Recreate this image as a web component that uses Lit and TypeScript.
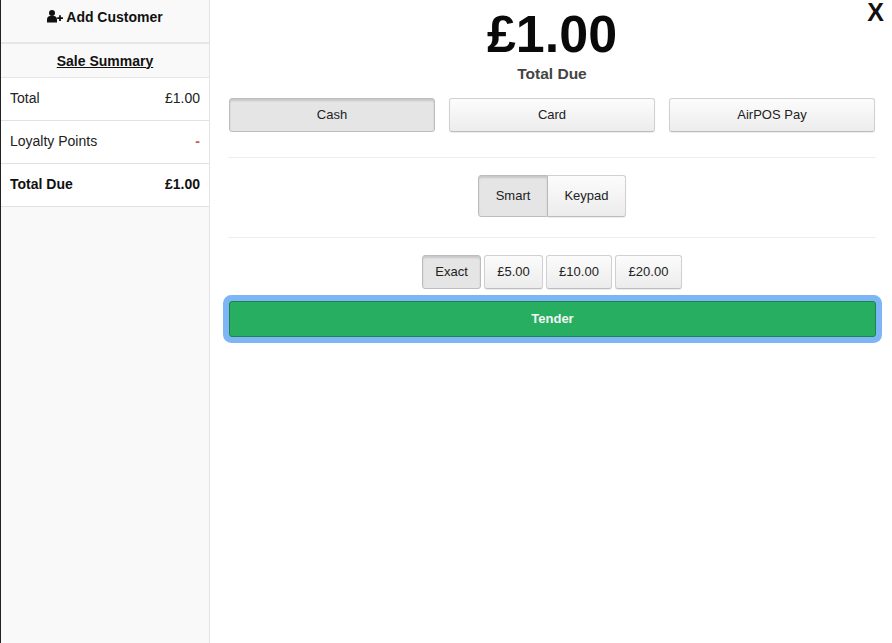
import { LitElement, html, css } from "lit";
import { customElement } from "lit/decorators.js";

@customElement("app-root")
export class AppRoot extends LitElement {
  static styles = css`
    :host {
      display: block;
      width: 892px;
      height: 643px;
      overflow: hidden;
      background: #fff;
      font-family: "Liberation Sans", Arial, sans-serif;
      color: #111;
    }
    * { box-sizing: border-box; }
    .page { display: flex; height: 643px; }
    .side {
      width: 210px;
      flex: none;
      background: #f9f9f9;
      border-left: 1px solid #222;
      border-right: 1px solid #e4e4e4;
    }
    .add {
      height: 44px;
      padding-bottom: 9px;
      display: flex;
      align-items: center;
      justify-content: center;
      gap: 3px;
      font-size: 14px;
      font-weight: bold;
      color: #111;
      border-bottom: 2px solid #e6e6e6;
    }
    .add svg { width: 16px; height: 13px; display: block; margin-top: -1px; }
    .title {
      height: 34px;
      display: flex;
      align-items: center;
      justify-content: center;
      font-size: 14px;
      font-weight: bold;
      text-decoration: underline;
      border-bottom: 1px solid #e6e6e6;
    }
    .row {
      height: 43px;
      padding: 0 9px 2px 9px;
      background: #fff;
      display: flex;
      align-items: center;
      justify-content: space-between;
      font-size: 14px;
      color: #222;
      border-bottom: 1px solid #e2e2e2;
    }
    .row.strong { font-weight: bold; color: #111; }
    .dash { color: #c0605a; font-weight: bold; }
    .main {
      flex: 1;
      min-width: 0;
      padding: 0 17px 0 19px;
      position: relative;
    }
    .close {
      position: absolute;
      right: 8px;
      top: 0;
      font-size: 25px;
      font-weight: bold;
      line-height: 25px;
      color: #111;
    }
    .amount {
      text-align: center;
      font-size: 52px;
      font-weight: bold;
      line-height: 52px;
      padding-top: 8px;
      color: #0a0a0a;
      height: 61px;
    }
    .due {
      text-align: center;
      font-size: 15.5px;
      font-weight: bold;
      line-height: 16px;
      margin-top: 5px;
      color: #444;
    }
    .pay {
      display: grid;
      grid-template-columns: repeat(3, 206px);
      justify-content: space-between;
      margin-top: 16px;
    }
    .btn {
      height: 34px;
      padding-bottom: 1px;
      display: flex;
      align-items: center;
      justify-content: center;
      border: 1px solid #d0d0d0;
      border-bottom-color: #bdbdbd;
      border-radius: 3px;
      background: linear-gradient(#fcfcfc, #ececec);
      font-size: 13px;
      color: #222;
      box-shadow: 0 1px 1px rgba(0, 0, 0, 0.08);
    }
    .btn.on {
      background: #e5e5e5;
      border-color: #bdbdbd;
      box-shadow: inset 0 2px 2px rgba(0, 0, 0, 0.13);
    }
    .sep {
      height: 1px;
      background: #eee;
      margin: 25px -1px 0 -1px;
    }
    .seg {
      display: flex;
      justify-content: center;
      margin-top: 17px;
    }
    .seg .btn { height: 42px; border-radius: 0; }
    .seg .btn:first-child { width: 70px; border-radius: 3px 0 0 3px; }
    .seg .btn:last-child { width: 78px; border-left: none; border-radius: 0 3px 3px 0; }
    .seg + .sep { margin-top: 20px; }
    .chips {
      display: flex;
      justify-content: center;
      gap: 3px;
      margin-top: 17px;
    }
    .chips .btn:nth-child(1) { width: 59px; }
    .chips .btn:nth-child(2) { width: 59px; }
    .chips .btn:nth-child(3) { width: 66px; }
    .chips .btn:nth-child(4) { width: 67px; }
    .tender {
      height: 36px;
      margin: 12px -1px 0 0;
      padding-bottom: 1px;
      display: flex;
      align-items: center;
      justify-content: center;
      background: #27ae60;
      border: 1px solid #1e8449;
      border-radius: 3px;
      color: #f4f4f4;
      font-size: 13px;
      font-weight: bold;
      box-shadow: 0 0 0 6px #7db5f7;
    }
  `;

  render() {
    return html`
      <div class="page">
        <aside class="side">
          <div class="add">
            <svg viewBox="0 0 16 13" aria-hidden="true">
              <circle cx="5" cy="3" r="3" fill="#111"></circle>
              <path d="M0 12.5V9.2C0 7.4 1.4 6 3 6H7C8.6 6 10 7.4 10 9.2V12.5Z" fill="#111"></path>
              <path d="M13 5.2V11M10.2 8.1H16" stroke="#111" stroke-width="1.8" fill="none"></path>
            </svg>
            <span>Add Customer</span>
          </div>
          <div class="title">Sale Summary</div>
          <div class="row"><span>Total</span><span>£1.00</span></div>
          <div class="row"><span>Loyalty Points</span><span class="dash">-</span></div>
          <div class="row strong"><span>Total Due</span><span>£1.00</span></div>
        </aside>
        <main class="main">
          <div class="close">X</div>
          <div class="amount">£1.00</div>
          <div class="due">Total Due</div>
          <div class="pay">
            <div class="btn on">Cash</div>
            <div class="btn">Card</div>
            <div class="btn">AirPOS Pay</div>
          </div>
          <div class="sep"></div>
          <div class="seg">
            <div class="btn on">Smart</div>
            <div class="btn">Keypad</div>
          </div>
          <div class="sep"></div>
          <div class="chips">
            <div class="btn on">Exact</div>
            <div class="btn">£5.00</div>
            <div class="btn">£10.00</div>
            <div class="btn">£20.00</div>
          </div>
          <div class="tender">Tender</div>
        </main>
      </div>
    `;
  }
}
